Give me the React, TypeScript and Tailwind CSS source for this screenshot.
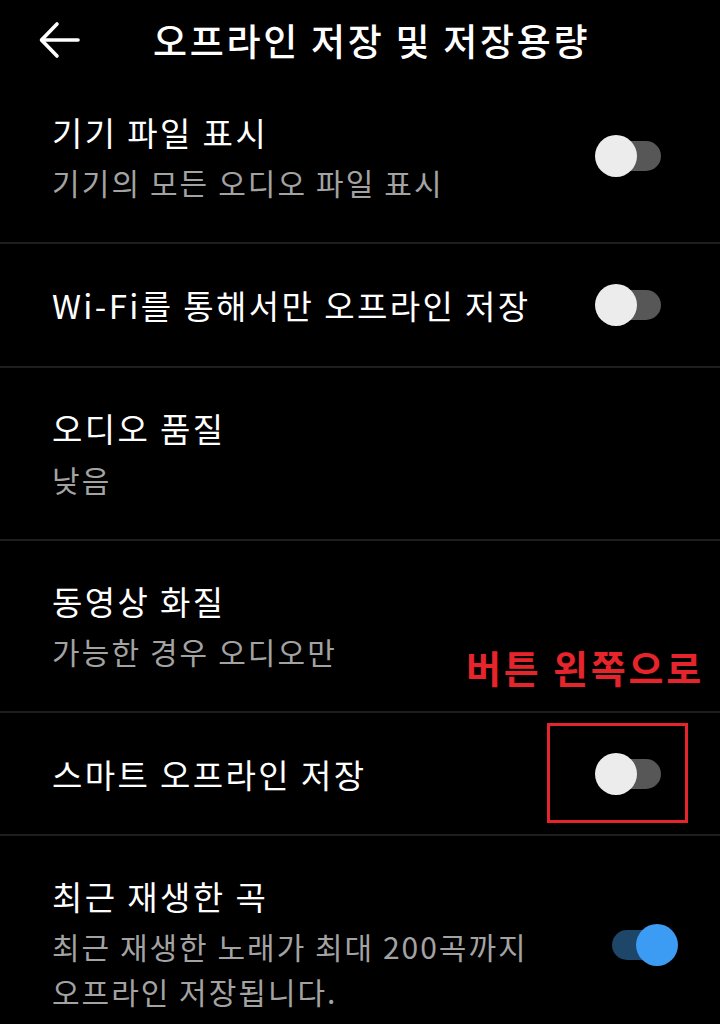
import React from "react";

const font = { fontFamily: '"Noto Sans CJK KR", "Noto Sans", sans-serif' };

function Toggle({ on }: { on?: boolean }) {
  return (
    <div className="relative w-[66px] h-[42px] shrink-0">
      <div
        className={
          on
            ? "absolute left-[0px] top-[6px] w-[61px] h-[30px] rounded-full bg-[#1d4668]"
            : "absolute right-[0px] top-[6px] w-[61px] h-[30px] rounded-full bg-[#575757]"
        }
      />
      <div
        className={
          on
            ? "absolute right-[0px] top-[0px] w-[42px] h-[42px] rounded-full bg-[#3c9bf2]"
            : "absolute left-[0px] top-[0px] w-[42px] h-[42px] rounded-full bg-[#ececec]"
        }
      />
    </div>
  );
}

function Divider() {
  return <div className="h-[2px] bg-[#1e1e1e]" />;
}

const main = "text-[33px] leading-[44px] tracking-[2.4px]";
const sub = "text-[30px] leading-[44px] text-[#a3a3a3] tracking-[2.1px]";

export default function App() {
  return (
    <div className="relative w-[720px] h-[1024px] bg-black text-white overflow-hidden" style={font}>
      {/* Header */}
      <div className="flex items-center h-[70px] pt-[10px]">
        <svg className="ml-[38px] w-[44px] h-[40px]" viewBox="0 0 44 40" fill="none" stroke="white" strokeWidth="3.6" strokeLinecap="round" strokeLinejoin="round">
          <path d="M40 20 H4" />
          <path d="M19 4 L3.5 20 L19 36" />
        </svg>
        <div className="ml-[71px] text-[37px] leading-[44px] font-medium tracking-[2.7px]">오프라인 저장 및 저장용량</div>
      </div>

      {/* Row 1 */}
      <div className="flex items-center justify-between pl-[52px] pr-[59px] h-[172px]">
        <div className="pt-[2px]">
          <div className={main}>기기 파일 표시</div>
          <div className={"mt-[6px] " + sub}>기기의 모든 오디오 파일 표시</div>
        </div>
        <div className="self-start mt-[65px]">
          <Toggle />
        </div>
      </div>
      <Divider />

      {/* Row 2 */}
      <div className="flex items-center justify-between pl-[52px] pr-[59px] h-[122px]">
        <div className={main}>Wi-Fi를 통해서만 오프라인 저장</div>
        <Toggle />
      </div>
      <Divider />

      {/* Row 3 */}
      <div className="flex flex-col justify-center pl-[52px] h-[171px]">
        <div className={main}>오디오 품질</div>
        <div className={"mt-[7px] " + sub}>낮음</div>
      </div>
      <Divider />

      {/* Row 4 */}
      <div className="flex flex-col justify-center pl-[52px] h-[170px]">
        <div className={main}>동영상 화질</div>
        <div className={"mt-[6px] " + sub}>가능한 경우 오디오만</div>
      </div>
      <Divider />

      {/* Row 5 */}
      <div className="flex items-center justify-between pl-[52px] pr-[59px] h-[121px]">
        <div className={main}>스마트 오프라인 저장</div>
        <Toggle />
      </div>
      <Divider />

      {/* Row 6 */}
      <div className="flex items-start justify-between pl-[52px] pr-[42px] pt-[38px]">
        <div>
          <div className={main}>최근 재생한 곡</div>
          <div className="mt-[6px] text-[30px] leading-[45px] text-[#a3a3a3] tracking-[2px]">
            최근 재생한 노래가 최대 200곡까지
            <br />
            오프라인 저장됩니다.
          </div>
        </div>
        <div className="mt-[50px]">
          <Toggle on />
        </div>
      </div>

      {/* Annotation overlay */}
      <div className="absolute left-[466px] top-[642px] text-[38px] leading-[50px] font-bold text-[#e5242b] tracking-[2.8px]">
        버튼 왼쪽으로
      </div>
      <div className="absolute left-[547px] top-[723px] w-[141px] h-[100px] border-[3px] border-[#e5242b]" />
    </div>
  );
}
